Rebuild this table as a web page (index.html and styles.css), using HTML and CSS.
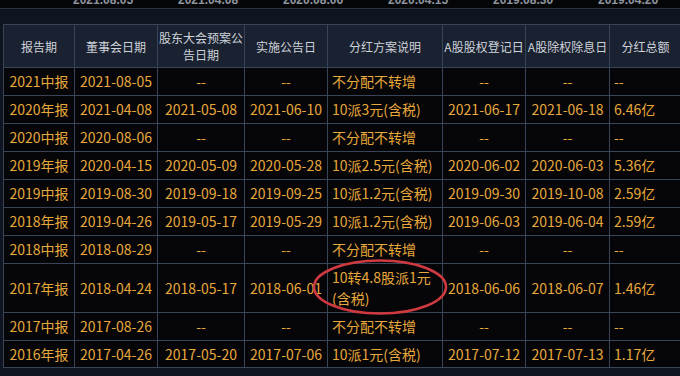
FILE: index.html
```html
<!DOCTYPE html>
<html lang="zh-CN">
<head>
<meta charset="utf-8">
<title>分红送配</title>
<link rel="stylesheet" href="styles.css">
</head>
<body>
<div class="page">
  <div class="strip">
    <span>2021.08.05</span><span>2021.04.08</span><span>2020.08.06</span><span>2020.04.15</span><span>2019.08.30</span><span>2019.04.26</span>
  </div>
  <div class="wrap">
    <table class="tbl">
      <colgroup>
        <col class="c1"><col class="c2"><col class="c3"><col class="c4"><col class="c5"><col class="c6"><col class="c7"><col class="c8">
      </colgroup>
      <thead>
        <tr>
          <th>报告期</th><th>董事会日期</th><th>股东大会预案公告日期</th><th>实施公告日</th><th>分红方案说明</th><th>A股股权登记日</th><th>A股除权除息日</th><th>分红总额</th>
        </tr>
      </thead>
      <tbody>
        <tr><td>2021中报</td><td>2021-08-05</td><td>--</td><td>--</td><td class="l">不分配不转增</td><td>--</td><td>--</td><td class="l">--</td></tr>
        <tr><td>2020年报</td><td>2021-04-08</td><td>2021-05-08</td><td>2021-06-10</td><td class="l">10派3元(含税)</td><td>2021-06-17</td><td>2021-06-18</td><td class="l">6.46亿</td></tr>
        <tr><td>2020中报</td><td>2020-08-06</td><td>--</td><td>--</td><td class="l">不分配不转增</td><td>--</td><td>--</td><td class="l">--</td></tr>
        <tr><td>2019年报</td><td>2020-04-15</td><td>2020-05-09</td><td>2020-05-28</td><td class="l">10派2.5元(含税)</td><td>2020-06-02</td><td>2020-06-03</td><td class="l">5.36亿</td></tr>
        <tr><td>2019中报</td><td>2019-08-30</td><td>2019-09-18</td><td>2019-09-25</td><td class="l">10派1.2元(含税)</td><td>2019-09-30</td><td>2019-10-08</td><td class="l">2.59亿</td></tr>
        <tr><td>2018年报</td><td>2019-04-26</td><td>2019-05-17</td><td>2019-05-29</td><td class="l">10派1.2元(含税)</td><td>2019-06-03</td><td>2019-06-04</td><td class="l">2.59亿</td></tr>
        <tr><td>2018中报</td><td>2018-08-29</td><td>--</td><td>--</td><td class="l">不分配不转增</td><td>--</td><td>--</td><td class="l">--</td></tr>
        <tr><td>2017年报</td><td>2018-04-24</td><td>2018-05-17</td><td>2018-06-01</td><td class="l">10转4.8股派1元(含税)</td><td>2018-06-06</td><td>2018-06-07</td><td class="l">1.46亿</td></tr>
        <tr><td>2017中报</td><td>2017-08-26</td><td>--</td><td>--</td><td class="l">不分配不转增</td><td>--</td><td>--</td><td class="l">--</td></tr>
        <tr class="last"><td>2016年报</td><td>2017-04-26</td><td>2017-05-20</td><td>2017-07-06</td><td class="l">10派1元(含税)</td><td>2017-07-12</td><td>2017-07-13</td><td class="l">1.17亿</td></tr>
      </tbody>
    </table>
    <svg class="mark" width="140" height="60" viewBox="0 0 140 60" aria-hidden="true">
      <ellipse cx="68" cy="29" rx="66" ry="26.5" fill="none" stroke="#cf3a40" stroke-width="2.6"/>
    </svg>
  </div>
</div>
</body>
</html>
```

FILE: styles.css
```css
html, body {
  margin: 0;
  padding: 0;
  background: #0f1520;
  overflow: hidden;
}
.page {
  width: 680px;
  height: 376px;
  overflow: hidden;
  font-family: "Noto Sans CJK SC", "Noto Sans", sans-serif;
}
.strip {
  height: 8px;
  background: #040507;
  border-bottom: 1px solid #2b323c;
  overflow: hidden;
  display: flex;
  padding-left: 73px;
  gap: 41px;
  font-family: "Liberation Sans", Arial, sans-serif;
  font-size: 12px;
  font-weight: bold;
  color: #8e959e;
  line-height: 1;
}
.strip span {
  display: block;
  width: 64px;
  margin-top: -6px;
}
.wrap {
  position: relative;
  padding: 15px 0 0 3px;
}
.tbl {
  border-collapse: collapse;
  table-layout: fixed;
  width: 678px;
}
.c1 { width: 71px; }
.c2 { width: 83px; }
.c3 { width: 87px; }
.c4 { width: 83px; }
.c5 { width: 115px; }
.c6 { width: 83px; }
.c7 { width: 84px; }
.c8 { width: 72px; }
.tbl th, .tbl td {
  border: 1px solid #384457;
}
.tbl th {
  background: #1a2130;
  color: #ced3da;
  font-weight: normal;
  font-size: 12px;
  line-height: 17px;
  height: 42px;
  padding: 0 1px;
  text-align: center;
  vertical-align: middle;
  white-space: normal;
}
.tbl td {
  background: #060608;
  color: #e8a93c;
  font-size: 14px;
  line-height: 21px;
  padding: 3px 1px;
  text-align: center;
  white-space: nowrap;
}
.tbl td.l {
  text-align: left;
  padding-left: 4px;
  white-space: normal;
}
.tbl tr.last td {
  padding: 3px 1px 2px;
}
.tbl tr.last td.l {
  padding-left: 4px;
}
.mark {
  position: absolute;
  left: 312px;
  top: 249px;
}
```
